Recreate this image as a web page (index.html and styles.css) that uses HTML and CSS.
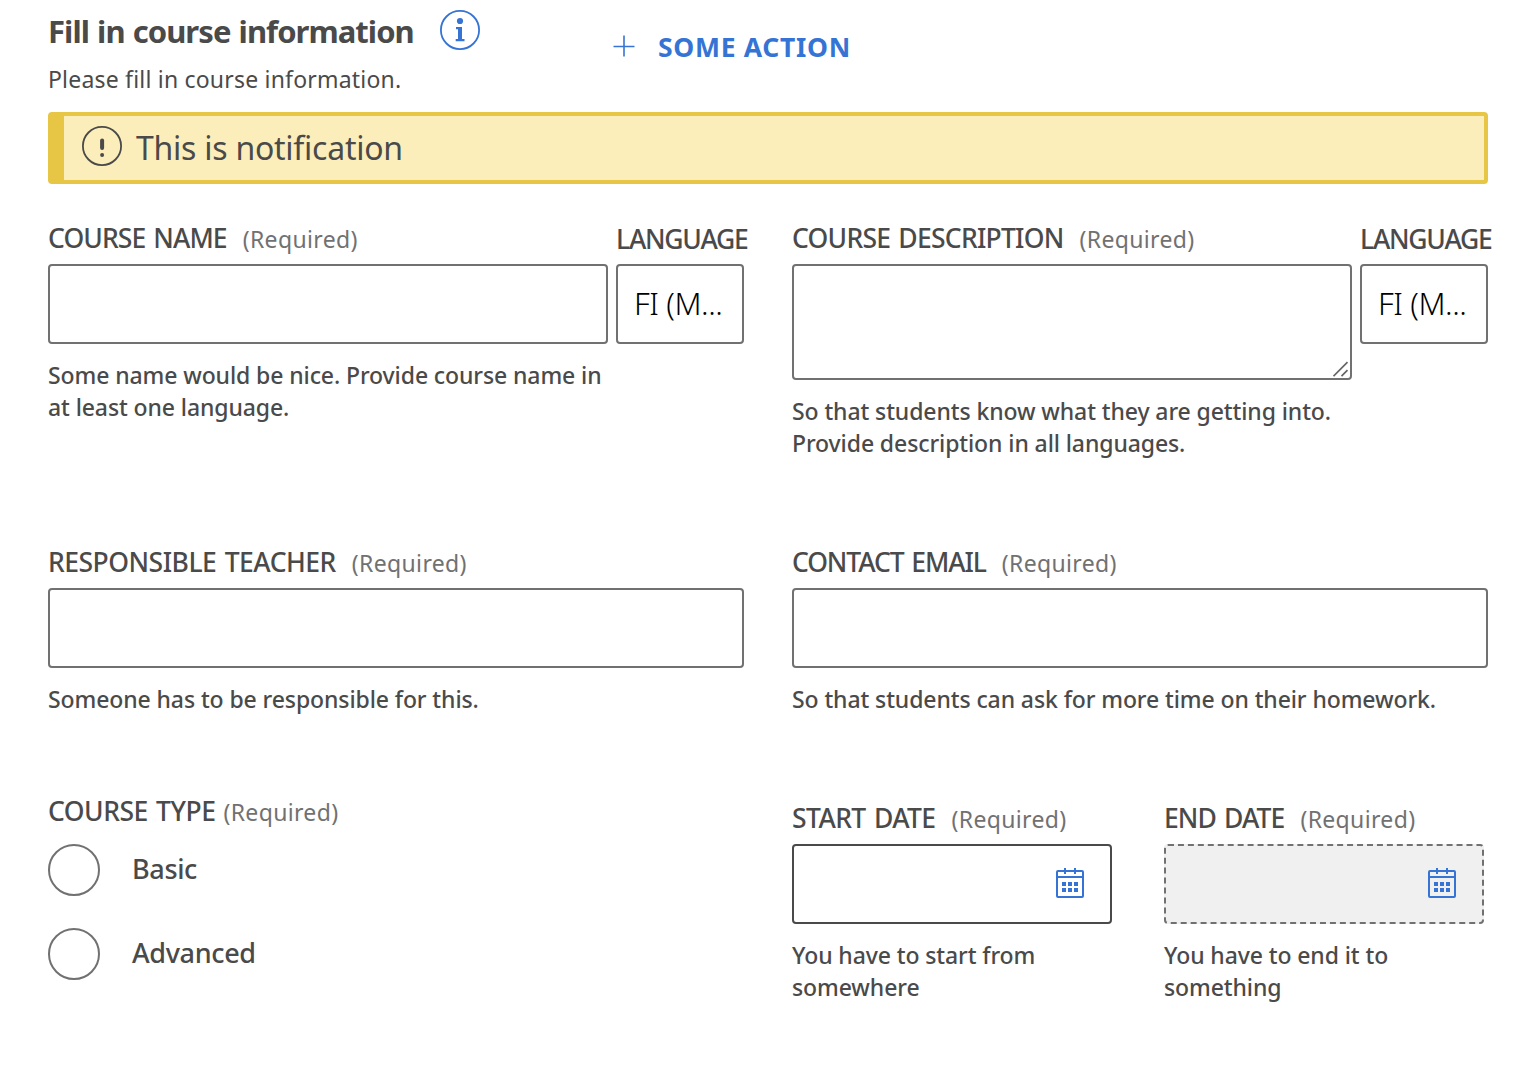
FILE: index.html
```html
<!DOCTYPE html>
<html lang="en">
<head>
<meta charset="utf-8">
<title>Course information</title>
<link rel="stylesheet" href="styles.css">
</head>
<body>
<svg class="defs" aria-hidden="true">
  <symbol id="calendar" viewBox="0 0 32 32">
    <rect x="3" y="4" width="26" height="26" rx="1" fill="none" stroke="currentColor" stroke-width="2"/>
    <path d="M3 10H29M11 1V7M21 1V7" fill="none" stroke="currentColor" stroke-width="2"/>
    <path d="M8 15h4v4H8zM14 15h4v4h-4zM20 15h4v4h-4zM8 21h4v4H8zM14 21h4v4h-4zM20 21h4v4h-4z" fill="currentColor"/>
  </symbol>
</svg>
<main class="form">
  <header class="header">
    <div class="intro">
      <div class="title-row">
        <h1 class="title">Fill in course information</h1>
        <svg class="info" viewBox="0 0 40 40">
          <circle cx="20" cy="20" r="19.100" fill="none" stroke="currentColor" stroke-width="1.800"/>
          <circle cx="20" cy="11" r="3.100" fill="currentColor"/>
          <path d="M16 17h6v12h2.500v2.200H15.700V29H18v-9.800h-2z" fill="currentColor"/>
        </svg>
      </div>
      <p class="lead">Please fill in course information.</p>
    </div>
    <a class="action">
      <svg class="plus" viewBox="0 0 24 24"><path d="M12 1.500V22.500M1.500 12.500H22.500" stroke="currentColor" stroke-width="1.600"/></svg>
      <span class="action-text">SOME ACTION</span>
    </a>
  </header>

  <div class="notice">
    <svg class="notice-icon" viewBox="0 0 40 40">
      <circle cx="20" cy="20" r="19.100" fill="none" stroke="currentColor" stroke-width="1.800"/>
      <path d="M20.100 14.600V22" stroke="currentColor" stroke-width="4" stroke-linecap="round"/>
      <circle cx="20.100" cy="29" r="2" fill="currentColor"/>
    </svg>
    <span class="notice-text">This is notification</span>
  </div>

  <section class="row row-text">
    <div class="localized">
      <div class="field">
        <label class="label"><span class="name tight-8">COURSE NAME</span><span class="required">(Required)</span></label>
        <input class="box" type="text">
        <p class="help">Some name would be nice. Provide course name in<br>at least one language.</p>
      </div>
      <div class="language">
        <label class="label label-language"><span class="name tight-12">LANGUAGE</span></label>
        <div class="box select">FI (M...</div>
      </div>
    </div>
    <div class="localized">
      <div class="field">
        <label class="label"><span class="name tight-7">COURSE DESCRIPTION</span><span class="required">(Required)</span></label>
        <div class="box area">
          <svg class="grip" viewBox="0 0 16 16"><path d="M.5 15.200L14.500 1.200M8.500 15.200L14.500 9.200" stroke="currentColor" stroke-width="1.700"/></svg>
        </div>
        <p class="help">So that students know what they are getting into.<br>Provide description in all languages.</p>
      </div>
      <div class="language">
        <label class="label label-language"><span class="name tight-12">LANGUAGE</span></label>
        <div class="box select">FI (M...</div>
      </div>
    </div>
  </section>

  <section class="row row-contact">
    <div class="field">
      <label class="label"><span class="name tight-4">RESPONSIBLE TEACHER</span><span class="required">(Required)</span></label>
      <input class="box" type="text">
      <p class="help">Someone has to be responsible for this.</p>
    </div>
    <div class="field">
      <label class="label"><span class="name tight-10">CONTACT EMAIL</span><span class="required">(Required)</span></label>
      <input class="box" type="text">
      <p class="help">So that students can ask for more time on their homework.</p>
    </div>
  </section>

  <section class="row">
    <div class="type">
      <div class="label label-type"><span class="name tight-4">COURSE TYPE</span><span class="required">(Required)</span></div>
      <label class="option"><span class="radio"></span><span class="option-text">Basic</span></label>
      <label class="option"><span class="radio"></span><span class="option-text">Advanced</span></label>
    </div>
    <div class="dates">
      <div class="field">
        <label class="label"><span class="name tight-5">START DATE</span><span class="required">(Required)</span></label>
        <div class="box date"><svg class="calendar"><use href="#calendar"/></svg></div>
        <p class="help">You have to start from<br>somewhere</p>
      </div>
      <div class="field">
        <label class="label"><span class="name tight-8">END DATE</span><span class="required">(Required)</span></label>
        <div class="box date disabled"><svg class="calendar"><use href="#calendar"/></svg></div>
        <p class="help">You have to end it to<br>something</p>
      </div>
    </div>
  </section>
</main>
</body>
</html>
```
FILE: styles.css
```css
* { box-sizing: border-box; }
body {
  margin: 0;
  background: #fff;
  color: #4a4a4a;
  font: 500 23px/32px "Noto Sans", sans-serif;
  letter-spacing: -0.1px;
}
h1, p { margin: 0; }
svg { display: block; flex: none; }
.defs { display: none; }
.form { padding: 10px 48px 0; }

.header { display: flex; height: 102px; }
.intro { width: 564px; }
.title-row { display: flex; gap: 27px; height: 40px; }
.title {
  width: 365px;
  padding-top: 1px;
  font-size: 31px;
  line-height: 40px;
  font-weight: 700;
  letter-spacing: -0.95px;
  word-spacing: 1px;
  white-space: nowrap;
}
.info { width: 40px; height: 40px; color: #3574d4; }
.lead { padding-top: 13px; font-weight: 400; letter-spacing: 0.2px; }
.action { display: flex; height: 32px; margin-top: 21px; color: #3574d4; }
.plus { width: 24px; height: 24px; margin: 3px 22px 0 0; }
.action-text { font-size: 26.500px; font-weight: 700; letter-spacing: 0.7px; }

.notice {
  display: flex;
  gap: 14px;
  height: 72px;
  padding: 10px 18px;
  border: 4px solid #e8c645;
  border-left-width: 16px;
  border-radius: 4px;
  background: #fbeeba;
}
.notice-icon { width: 40px; height: 40px; }
.notice-text { font-size: 32px; font-weight: 400; line-height: 44px; letter-spacing: -0.25px; }

.row { display: grid; grid-template-columns: 696px 696px; gap: 48px; }
.row-text { height: 324px; margin-top: 38px; }
.row-contact { height: 249px; }
.localized { display: grid; grid-template-columns: 560px 128px; gap: 8px; }
.field, .language { min-width: 0; }

.label { display: flex; align-items: baseline; gap: 16px; height: 42px; white-space: nowrap; }
.name { font-size: 26.500px; word-spacing: 2px; }
.required { color: #717171; font-weight: 400; letter-spacing: 0.35px; }
.label-language { padding-top: 1px; }
.tight-4 { letter-spacing: -0.5px; }
.tight-5 { letter-spacing: -0.6px; }
.tight-7 { letter-spacing: -0.75px; }
.tight-8 { letter-spacing: -0.9px; }
.tight-10 { letter-spacing: -1.1px; }
.tight-12 { letter-spacing: -1.25px; }

.box {
  display: block;
  width: 100%;
  height: 80px;
  border: 2px solid #717171;
  border-radius: 4px;
  background: #fff;
}
.help { padding-top: 15px; white-space: nowrap; }
.select {
  padding: 0 0 0 16px;
  color: #000;
  font-size: 31px;
  font-weight: 300;
  line-height: 74px;
  letter-spacing: -0.4px;
}
.area { display: flex; align-items: flex-end; justify-content: flex-end; height: 116px; padding: 1px; color: #666; }
.grip { width: 16px; height: 16px; }

.label-type { gap: 8px; height: 49px; }
.option { display: flex; gap: 32px; height: 52px; margin-bottom: 32px; }
.radio { width: 52px; height: 52px; border: 2px solid #717171; border-radius: 50%; }
.option-text { font-size: 27px; line-height: 50px; letter-spacing: -0.35px; }

.dates { display: grid; grid-template-columns: 320px 320px; gap: 52px; padding-top: 7px; }
.date { display: flex; align-items: center; justify-content: flex-end; padding: 0 24px 2px 0; border-color: #4a4a4a; }
.disabled { border: 2px dashed #717171; background: #f0f0f0; }
.calendar { width: 32px; height: 32px; color: #3574d4; }
```
